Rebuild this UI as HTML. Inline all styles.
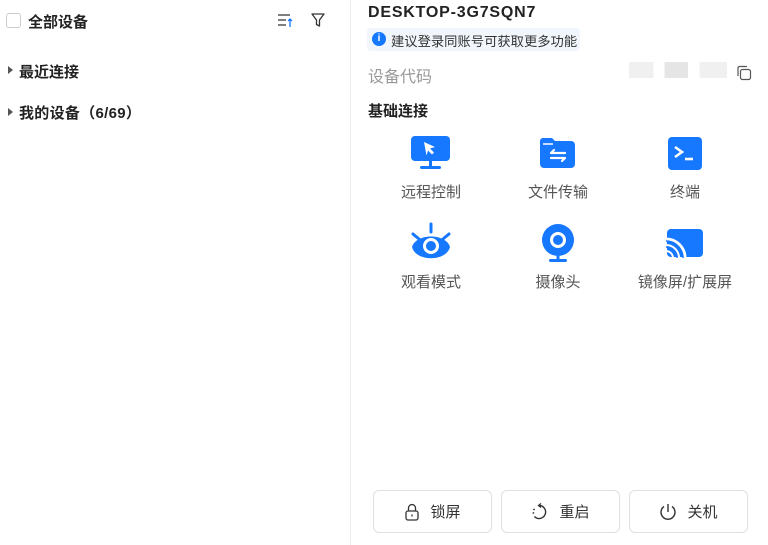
<!DOCTYPE html><html><head><meta charset="utf-8"><style>
body{margin:0;width:768px;height:545px;background:#fff;font-family:"Liberation Sans","Noto Sans CJK SC",sans-serif;position:relative;overflow:hidden;color:#222}
.a{position:absolute;white-space:nowrap}
.b{font-weight:bold}
.lbl{font-size:15px;color:#555;text-align:center;width:130px}
.btn{position:absolute;top:490px;width:119px;height:43px;border:1px solid #e0e0e0;border-radius:6px;box-sizing:border-box;display:flex;align-items:center;justify-content:center;font-size:15px;color:#333;gap:10px}
</style></head><body>
<div class="a" style="left:350px;top:0;width:1px;height:545px;background:#ececec"></div>
<div class="a" style="left:6px;top:13px;width:15px;height:15px;border:1px solid #ccc;border-radius:3px;box-sizing:border-box"></div>
<div class="a b" style="left:28px;top:11px;font-size:15px">全部设备</div>
<svg class="a" style="left:277px;top:13px" width="18" height="16" viewBox="0 0 18 16"><path d="M1 2h12M1 7h8M1 12h8" stroke="#333" stroke-width="1.3"/><path d="M13 14V6M11 8l2-2 2 2" stroke="#1677ff" stroke-width="1.3" fill="none"/></svg>
<svg class="a" style="left:310px;top:12px" width="16" height="16" viewBox="0 0 16 16"><path d="M2 2h12l-4.5 6v6l-3-1.5V8z" stroke="#333" stroke-width="1.3" fill="none" stroke-linejoin="round"/></svg>
<div class="a" style="left:8px;top:66px;width:0;height:0;border-left:5px solid #555;border-top:4px solid transparent;border-bottom:4px solid transparent"></div>
<div class="a b" style="left:19px;top:61px;font-size:15px">最近连接</div>
<div class="a" style="left:8px;top:108px;width:0;height:0;border-left:5px solid #555;border-top:4px solid transparent;border-bottom:4px solid transparent"></div>
<div class="a b" style="left:19px;top:102px;font-size:15px;letter-spacing:0.3px">我的设备（6/69）</div>

<div class="a b" style="left:368px;top:4px;font-size:16px;letter-spacing:0.8px">DESKTOP-3G7SQN7</div>
<div class="a" style="left:367px;top:28px;width:213px;height:23px;background:#f1f6fc;border-radius:4px"></div>
<div class="a" style="left:372px;top:32px;width:14px;height:14px;border-radius:50%;background:#1677ff;color:#fff;font-size:10px;text-align:center;line-height:14px;font-weight:bold">i</div>
<div class="a" style="left:391px;top:31px;font-size:13.3px;color:#333">建议登录同账号可获取更多功能</div>
<div class="a" style="left:368px;top:63px;font-size:16px;color:#999">设备代码</div>
<div class="a" style="left:629px;top:62px;width:98px;height:16px;background:linear-gradient(90deg,#eee 0 25%,#fff 25% 36%,#e2e2e2 36% 60%,#fff 60% 72%,#eee 72%);opacity:.9"></div>
<svg class="a" style="left:736px;top:65px" width="16" height="16" viewBox="0 0 16 16"><rect x="4.5" y="4.5" width="10" height="10" rx="2" fill="none" stroke="#555" stroke-width="1.2"/><path d="M2 11V3a1.5 1.5 0 0 1 1.5-1.5H11" fill="none" stroke="#555" stroke-width="1.2"/></svg>
<div class="a b" style="left:368px;top:100px;font-size:15px">基础连接</div>

<svg class="a" style="left:410px;top:135px" width="42" height="36" viewBox="0 0 42 36"><rect x="1" y="1" width="39" height="25" rx="4" fill="#1677ff"/><rect x="19" y="26" width="3" height="6" fill="#1677ff"/><rect x="10" y="31" width="21" height="3" rx="1.5" fill="#1677ff"/><path d="M14 7l11 5-5 1.5 4 4-2 2-4-4-1.5 5z" fill="#fff"/></svg>
<div class="a lbl" style="left:366px;top:181px">远程控制</div>
<svg class="a" style="left:538px;top:136px" width="40" height="36" viewBox="0 0 40 36"><path d="M2 5a3 3 0 0 1 3-3h9l3 3h16a4 4 0 0 1 4 4v19a4 4 0 0 1-4 4H6a4 4 0 0 1-4-4z" fill="#1677ff"/><path d="M5 8h10" stroke="#fff" stroke-width="1.5"/><path d="M13 17h14M16 14l-3 3M13 22h14M24 25l3-3" stroke="#fff" stroke-width="2.2" fill="none" stroke-linecap="round"/></svg>
<div class="a lbl" style="left:493px;top:181px">文件传输</div>
<svg class="a" style="left:667px;top:136px" width="36" height="36" viewBox="0 0 36 36"><rect x="1" y="1" width="34" height="33" rx="4" fill="#1677ff"/><path d="M8 11l7 5-7 5" stroke="#fff" stroke-width="2.6" fill="none"/><path d="M18 23h8" stroke="#fff" stroke-width="2.6"/></svg>
<div class="a lbl" style="left:620px;top:181px">终端</div>

<svg class="a" style="left:410px;top:222px" width="42" height="42" viewBox="0 0 42 42"><path d="M21 2v8M3 12l6 5M39 12l-6 5" stroke="#1677ff" stroke-width="3" stroke-linecap="round"/><path d="M2 25c4-14 34-14 38 0-4 15-34 15-38 0z" fill="#1677ff"/><circle cx="21" cy="24" r="8" fill="#fff"/><circle cx="21" cy="24" r="5" fill="#1677ff"/></svg>
<div class="a lbl" style="left:366px;top:271px">观看模式</div>
<svg class="a" style="left:540px;top:222px" width="36" height="42" viewBox="0 0 36 42"><circle cx="18" cy="18" r="16" fill="#1677ff"/><circle cx="18" cy="18" r="8" fill="#fff"/><circle cx="18" cy="18" r="5" fill="#1677ff"/><rect x="16.5" y="33" width="3" height="6" fill="#1677ff"/><rect x="9" y="37" width="18" height="3" rx="1.5" fill="#1677ff"/></svg>
<div class="a lbl" style="left:493px;top:271px">摄像头</div>
<svg class="a" style="left:665px;top:228px" width="40" height="32" viewBox="0 0 40 32"><rect x="2" y="1" width="36" height="28" rx="4" fill="#1677ff"/><path d="M1 11a19 19 0 0 1 19 19" stroke="#fff" stroke-width="3" fill="none"/><path d="M1 17a13 13 0 0 1 13 13" stroke="#fff" stroke-width="2" fill="none"/><path d="M1 13a17 17 0 0 1 17 17M1 19a11 11 0 0 1 11 11" stroke="#1677ff" stroke-width="1.5" fill="none"/><path d="M1 23a7 7 0 0 1 7 7" stroke="#fff" stroke-width="2" fill="none"/></svg>
<div class="a lbl" style="left:620px;top:271px">镜像屏/扩展屏</div>

<div class="btn" style="left:373px"><svg width="16" height="18" viewBox="0 0 16 18"><rect x="2" y="8" width="12" height="9" rx="2" fill="none" stroke="#333" stroke-width="1.3"/><path d="M4.5 8V5a3.5 3.5 0 0 1 7 0v3" fill="none" stroke="#333" stroke-width="1.3"/><path d="M8 11.5v2" stroke="#333" stroke-width="1.3"/></svg>锁屏</div>
<div class="btn" style="left:501px"><svg width="18" height="18" viewBox="0 0 18 18"><path d="M8 2.5a6.5 6.5 0 1 1-4.6 11" fill="none" stroke="#333" stroke-width="1.4"/><path d="M10 0.5L7.5 2.5 10 4.5" fill="none" stroke="#333" stroke-width="1.3"/><circle cx="3" cy="6.5" r=".9" fill="#333"/><circle cx="2.4" cy="10" r=".9" fill="#333"/></svg>重启</div>
<div class="btn" style="left:629px"><svg width="18" height="18" viewBox="0 0 18 18"><path d="M5 3.5a7 7 0 1 0 8 0" fill="none" stroke="#333" stroke-width="1.4"/><path d="M9 1v8" stroke="#333" stroke-width="1.4"/></svg>关机</div>
</body></html>
